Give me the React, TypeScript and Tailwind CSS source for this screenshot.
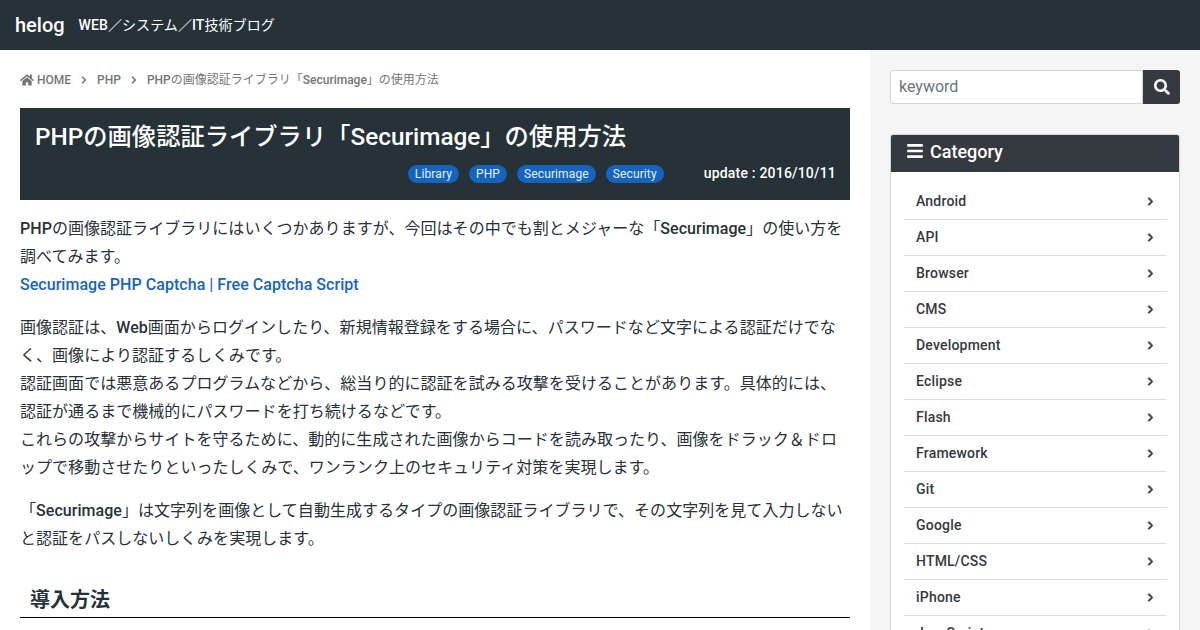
import { FaHome, FaChevronRight, FaSearch, FaBars } from 'react-icons/fa';

const FONT = "font-['Roboto','Noto_Sans_CJK_JP',sans-serif]";

const CATEGORIES = ['Android', 'API', 'Browser', 'CMS', 'Development', 'Eclipse', 'Flash', 'Framework', 'Git', 'Google', 'HTML/CSS', 'iPhone', 'JavaScript'];
const TAGS = ['Library', 'PHP', 'Securimage', 'Security'];

export default function App() {
    return (
        <div className={`${FONT} h-[630px] w-[1200px] overflow-hidden bg-white text-[#263238]`}>
            {/* Header */}
            <header className="flex h-[50px] items-center bg-[#263238] px-[15px] text-white">
                <span className="text-[20px] font-medium">helog</span>
                <span className="ml-[14px] text-[14px] tracking-[0.08px]"><span className="font-medium">WEB</span>／システム／<span className="font-medium">IT</span>技術ブログ</span>
            </header>

            <div className="flex h-[580px]">
                {/* Main column */}
                <main className="w-[870px] px-5 pt-5">
                    <nav className="mt-[1px] flex h-[18px] items-center text-[12px] text-[#757575]">
                        <FaHome size={14} className="mr-[3px]" />
                        <span className="font-medium">HOME</span>
                        <FaChevronRight size={8} stroke="currentColor" strokeWidth={30} className="mx-[9px]" />
                        <span className="font-medium">PHP</span>
                        <FaChevronRight size={8} stroke="currentColor" strokeWidth={30} className="mx-[9px]" />
                        <span><span className="font-medium">PHP</span>の画像認証ライブラリ「<span className="font-medium">Securimage</span>」の使用方法</span>
                    </nav>

                    <div className="mt-[19px] h-[92px] bg-[#263238] px-[15px] pt-[12px] text-white">
                        <h1 className="text-[24.3px] font-medium leading-[34px]">PHPの画像認証ライブラリ「Securimage」の使用方法</h1>
                        <div className="mt-[9px] flex items-center justify-end">
                            <div className="flex gap-[10px]">
                                {TAGS.map(t => (
                                    <span key={t} className="flex h-[18px] items-center rounded-full bg-[#1565c0] px-[7px] text-[12px] tracking-[0.12px] text-[#e3f2fd]">{t}</span>
                                ))}
                            </div>
                            <span className="ml-[40px] mr-[-1px] text-[14px] font-medium tracking-[0.2px]">update : 2016/10/11</span>
                        </div>
                    </div>

                    <article className="mt-[15px] text-[16px] leading-[28px] tracking-[0.04px]">
                        <p>
                            <b className="font-medium">PHP</b>の画像認証ライブラリにはいくつかありますが、今回はその中でも割とメジャーな「<b className="font-medium">Securimage</b>」の使い方を調べてみます。<br />
                            <a className="font-medium text-[#1565c0]">Securimage PHP Captcha | Free Captcha Script</a>
                        </p>
                        <p className="mt-[15px]">
                            画像認証は、<b className="font-medium">Web</b>画面からログインしたり、新規情報登録をする場合に、パスワードなど文字による認証だけでなく、画像により認証するしくみです。<br />
                            認証画面では悪意あるプログラムなどから、総当り的に認証を試みる攻撃を受けることがあります。具体的には、認証が通るまで機械的にパスワードを打ち続けるなどです。<br />
                            これらの攻撃からサイトを守るために、動的に生成された画像からコードを読み取ったり、画像をドラック＆ドロップで移動させたりといったしくみで、ワンランク上のセキュリティ対策を実現します。
                        </p>
                        <p className="mt-[15px]">
                            「<b className="font-medium">Securimage</b>」は文字列を画像として自動生成するタイプの画像認証ライブラリで、その文字列を見て入力しないと認証をパスしないしくみを実現します。
                        </p>
                    </article>

                    <h2 className="mt-[31px] border-b border-black px-[10px] pb-[1px] text-[20px] font-bold leading-[32px]">導入方法</h2>
                </main>

                {/* Sidebar */}
                <aside className="w-[330px] bg-[#f5f5f5] p-5">
                    <div className="flex h-[34px]">
                        <div className="flex flex-1 items-center rounded-l-[3px] border border-[#ced4da] bg-white px-2 text-[16px] text-[#6c757d]">keyword</div>
                        <div className="flex w-[37px] items-center justify-center rounded-r-[3px] bg-[#343a40] text-white">
                            <FaSearch size={16} />
                        </div>
                    </div>

                    <div className="mt-[30px] overflow-hidden rounded-[3px] border border-[#d5d5d5] bg-white">
                        <div className="flex h-[37px] items-center bg-[#343a40] px-[15px] pb-[5px] text-[18px] font-medium text-white">
                            <FaBars size={18} className="mr-[6px]" />
                            Category
                        </div>
                        <ul className="pl-[13px] pr-[12px] pt-[12px]">
                            {CATEGORIES.map(c => (
                                <li key={c} className="flex h-9 items-center justify-between border-b border-[#dcdcdc] pl-3 pr-[12px] text-[14px] font-medium tracking-[0.2px] text-[#343a40]">
                                    <span>{c}</span>
                                    <FaChevronRight size={9} stroke="currentColor" strokeWidth={40} />
                                </li>
                            ))}
                        </ul>
                    </div>
                </aside>
            </div>
        </div>
    );
}
